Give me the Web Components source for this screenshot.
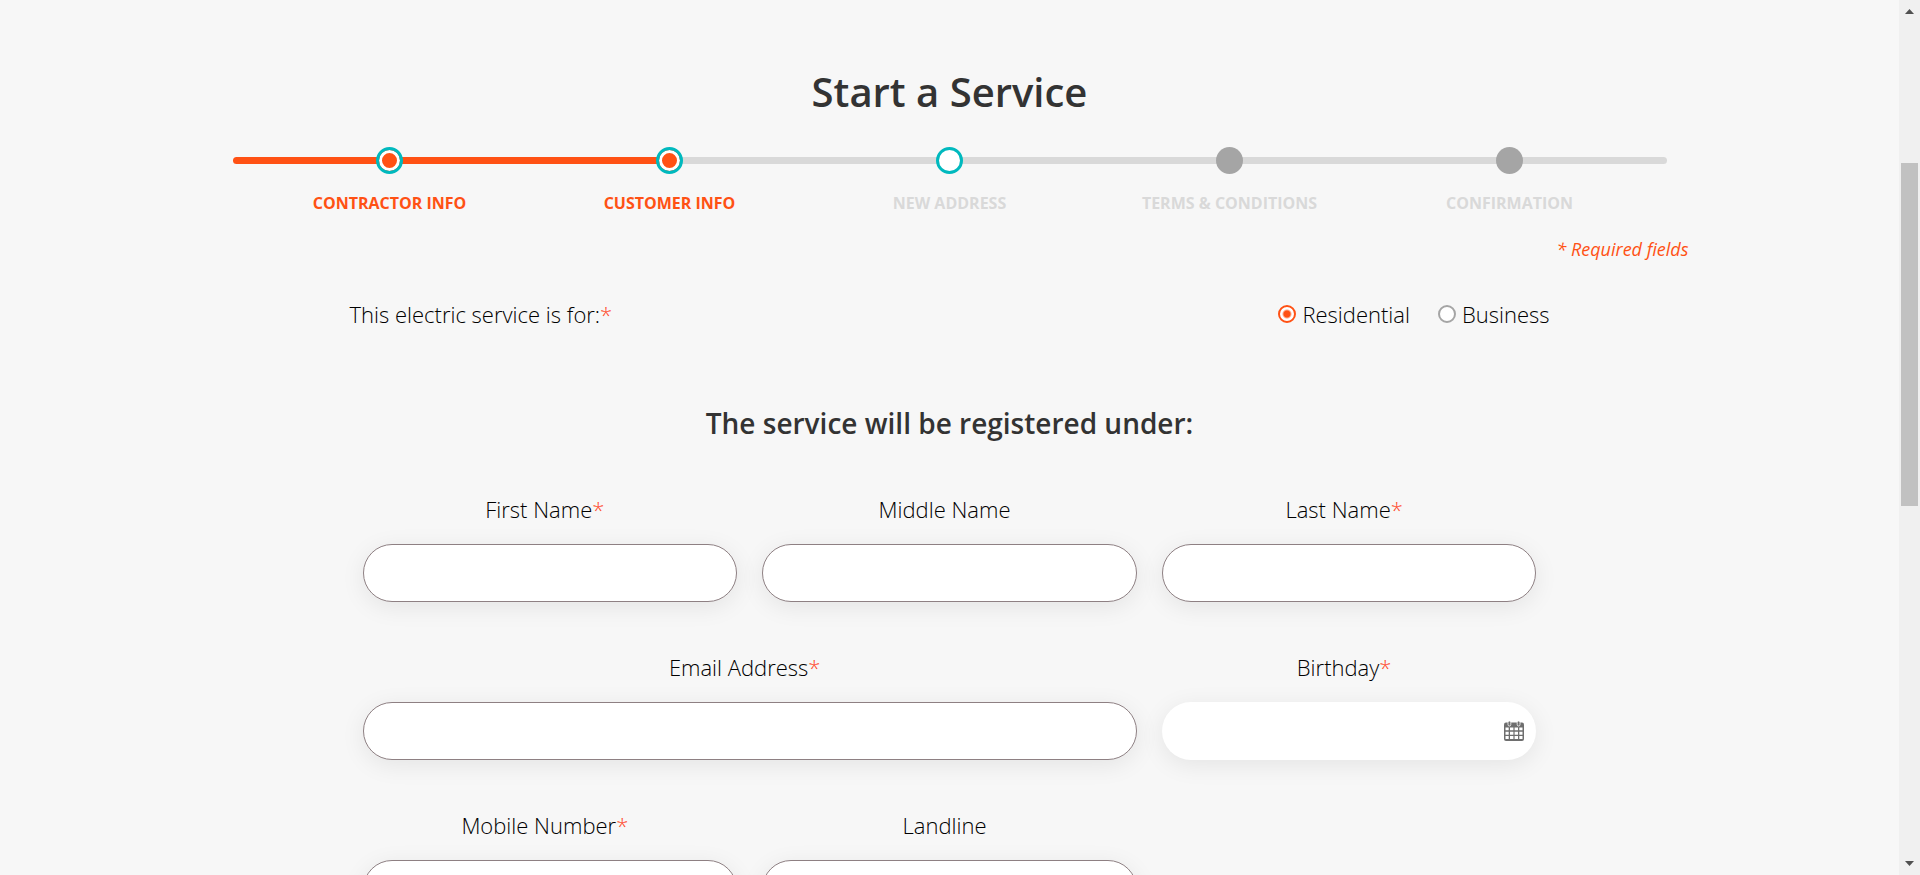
<!DOCTYPE html>
<html lang="en">
<head>
<meta charset="utf-8">
<title>Start a Service</title>
<style>
  html, body { margin: 0; height: 100%; }
  body {
    overflow: hidden;
    background: #f7f7f7;
    color: #000;
    font-family: "Open Sans", "Noto Sans", sans-serif;
    --accent: #ff5114;
    --teal: #00b9be;
  }
</style>
</head>
<body>
<service-page>
  <h1 slot="title">Start a Service</h1>
  <step-tracker slot="steps">
    <step-item state="done">Contractor Info</step-item>
    <step-item state="done">Customer Info</step-item>
    <step-item state="next">New Address</step-item>
    <step-item>Terms &amp; Conditions</step-item>
    <step-item>Confirmation</step-item>
  </step-tracker>
  <span slot="note">* Required fields</span>
  <service-type></service-type>
  <form-section heading="The service will be registered under:">
    <text-field label="First Name" required></text-field>
    <text-field label="Middle Name"></text-field>
    <text-field label="Last Name" required></text-field>
    <text-field label="Email Address" type="email" required wide></text-field>
    <date-field label="Birthday" required></date-field>
    <text-field label="Mobile Number" type="tel" required></text-field>
    <text-field label="Landline" type="tel"></text-field>
  </form-section>
</service-page>

<script>
class BaseElement extends HTMLElement {
  connectedCallback() {
    if (this.shadowRoot) return;
    this.attachShadow({ mode: 'open' }).innerHTML = this.render();
  }
}

customElements.define('service-page', class extends BaseElement {
  render() {
    return `
    <style>
      :host { display: grid; grid-template-columns: minmax(0, 1fr) 21px; height: 100vh; }
      main { overflow: hidden; padding-top: 65px; }
      ::slotted(h1) {
        margin: 0; text-align: center; color: #333;
        font-size: 40px; line-height: 54px; font-weight: 600;
      }
      .note {
        max-width: 1478px; margin: 23px auto 0; text-align: right; color: var(--accent);
        font-size: 18px; line-height: 24px; font-style: italic;
      }
      .content { max-width: 1200px; margin: 38px auto 0; }
    </style>
    <main>
      <slot name="title"></slot>
      <slot name="steps"></slot>
      <p class="note"><slot name="note"></slot></p>
      <div class="content"><slot></slot></div>
    </main>
    <scroll-rail></scroll-rail>`;
  }
});

customElements.define('step-tracker', class extends BaseElement {
  render() {
    return `
    <style>
      :host { display: grid; max-width: 1434px; margin: 28px auto 0; }
      .track, .steps { grid-area: 1 / 1; }
      .track {
        height: 7px; margin-top: 10px; border-radius: 4px;
        background: linear-gradient(to right, var(--accent) 31%, #d9d9d9 31%);
      }
      .steps {
        display: grid; grid-template-columns: repeat(5, minmax(0, 1fr)); padding: 0 17px;
      }
    </style>
    <div class="track"></div>
    <div class="steps"><slot></slot></div>`;
  }
});

customElements.define('step-item', class extends BaseElement {
  render() {
    return `
    <style>
      :host {
        display: flex; flex-direction: column; align-items: center; gap: 18px;
        color: #d9d9d9; font-size: 16px; line-height: 22px; font-weight: 700;
        text-transform: uppercase; white-space: nowrap;
      }
      .dot { box-sizing: border-box; width: 27px; height: 27px; border-radius: 50%; background: #a5a5a5; }
      :host([state]) .dot { border: 3px solid var(--teal); background: #fff; }
      :host([state="done"]) { color: var(--accent); }
      :host([state="done"]) .dot {
        background: var(--accent); box-shadow: inset 0 0 0 3px #fff;
      }
    </style>
    <div class="dot"></div>
    <span><slot></slot></span>`;
  }
});

customElements.define('service-type', class extends BaseElement {
  render() {
    return `
    <style>
      :host { display: block; font-size: 22px; line-height: 30px; font-weight: 300; }
      fieldset {
        display: flex; justify-content: space-between; align-items: center;
        margin: 0; padding: 0; border: 0;
      }
      .question i { color: #ff4a2c; font-style: normal; }
      .options { display: flex; gap: 28px; }
      label { display: flex; align-items: center; gap: 6px; }
      input {
        appearance: none; box-sizing: border-box; width: 18px; height: 18px; margin: 0;
        border: 2px solid #a5a5a5; border-radius: 50%; background: #fff;
      }
      input:checked {
        border-color: var(--accent);
        background: radial-gradient(circle, var(--accent) 3px, #fff 5px);
      }
    </style>
    <fieldset aria-labelledby="question">
      <span class="question" id="question">This electric service is for:<i>*</i></span>
      <div class="options">
        <label><input type="radio" name="type" checked>Residential</label>
        <label><input type="radio" name="type">Business</label>
      </div>
    </fieldset>`;
  }
});

customElements.define('form-section', class extends BaseElement {
  render() {
    return `
    <style>
      :host { display: block; margin-top: 75px; }
      h2 {
        margin: 0 0 52px; text-align: center; color: #333;
        font-size: 28px; line-height: 38px; font-weight: 600;
      }
      form {
        display: grid; grid-template-columns: repeat(3, minmax(0, 1fr));
        gap: 50px 25px; padding: 0 13px;
      }
      ::slotted([wide]) { grid-column: span 2; }
    </style>
    <h2>${this.getAttribute('heading')}</h2>
    <form><slot></slot></form>`;
  }
});

const fieldStyle = `
  :host {
    display: flex; flex-direction: column; gap: 20px;
    font-size: 22px; line-height: 30px; font-weight: 300;
  }
  label { padding-right: 10px; text-align: center; }
  label i { color: #ff4a2c; font-style: normal; }
  input {
    box-sizing: border-box; width: 100%; height: 58px; padding: 0 28px;
    border: 1px solid #8e8083; border-radius: 29px; background: #fff;
    box-shadow: 0 5px 24px rgba(0, 0, 0, .08); font: inherit; outline: 0;
  }`;

class TextField extends BaseElement {
  get labelMarkup() {
    const star = this.hasAttribute('required') ? '<i>*</i>' : '';
    return `<label for="field">${this.getAttribute('label')}${star}</label>`;
  }
  render() {
    return `
    <style>${fieldStyle}</style>
    ${this.labelMarkup}
    <input id="field" type="${this.getAttribute('type') || 'text'}">`;
  }
}
customElements.define('text-field', TextField);

customElements.define('date-field', class extends TextField {
  render() {
    return `
    <style>
      ${fieldStyle}
      .box { display: grid; align-items: center; }
      input, button { grid-area: 1 / 1; }
      input { border: 0; padding-right: 60px; }
      button {
        justify-self: end; width: 20px; height: 20px; margin-right: 12px; padding: 0;
        border: 0; background: none;
      }
      svg { display: block; }
    </style>
    ${this.labelMarkup}
    <div class="box">
      <input id="field" type="text">
      <button type="button" aria-label="Open calendar">
        <svg width="20" height="20" viewBox="0 0 20 20">
          <path fill="#6e6e6e" d="M2 1.500h16q2 0 2 2v14.500q0 2-2 2H2q-2 0-2-2V3.500q0-2 2-2z"/>
          <path fill="#6e6e6e" stroke="#fff" stroke-width=".8" d="M4 1.600q0-1.600 1.400-1.600t1.400 1.600v2q0 1.400-1.400 1.400T4 3.600zM13.200 1.600q0-1.600 1.400-1.600T16 1.600v2q0 1.400-1.400 1.400t-1.400-1.400z"/>
          <path fill="#fff" d="M1.500 6.500h3.200v2.800H1.500zM6 6.500h3.400v2.800H6zM10.600 6.500H14v2.800h-3.400zM15.300 6.500h3.200v2.800h-3.200zM1.500 10.700h3.200v3H1.500zM6 10.700h3.400v3H6zM10.600 10.700H14v3h-3.400zM15.300 10.700h3.200v3h-3.200zM1.500 15.100h3.200v3H1.500zM6 15.100h3.400v3H6zM10.600 15.100H14v3h-3.400zM15.300 15.100h3.200v3h-3.200z"/>
        </svg>
      </button>
    </div>`;
  }
});

customElements.define('scroll-rail', class extends BaseElement {
  render() {
    return `
    <style>
      :host {
        display: flex; flex-direction: column; align-items: center; box-sizing: border-box;
        padding: 9px 2px; background: #f0f0f0;
      }
      svg { display: block; flex: none; fill: #505050; }
      .lane { flex: 1; width: 100%; display: grid; grid-template-rows: 149fr 343fr 355fr; }
      .thumb { grid-row: 2; background: #c1c1c1; }
    </style>
    <svg width="9" height="5" viewBox="0 0 9 5"><path d="M4.500 0 9 5H0z"/></svg>
    <div class="lane"><div class="thumb"></div></div>
    <svg width="9" height="5" viewBox="0 0 9 5"><path d="M0 0h9L4.500 5z"/></svg>`;
  }
});
</script>
</body>
</html>
